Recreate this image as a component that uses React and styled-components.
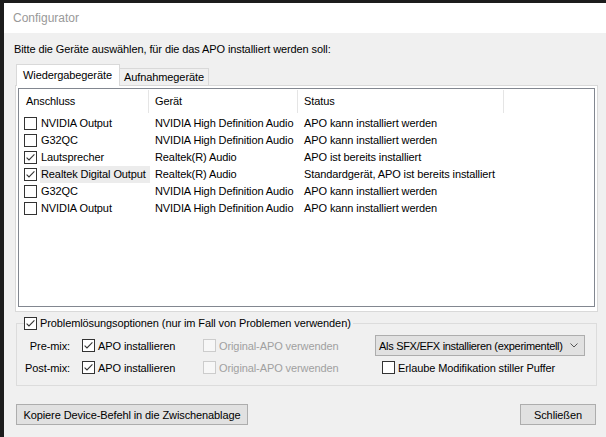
import React from "react";
import styled, { createGlobalStyle } from "styled-components";

const GlobalStyle = createGlobalStyle`
  html, body {
    margin: 0;
    padding: 0;
    background: #1c1c1c;
  }
  body {
    font-family: "Liberation Sans", Arial, sans-serif;
    font-size: 11px;
    letter-spacing: -0.1px;
    color: #000;
    overflow: hidden;
  }
`;

const Desktop = styled.div`
  width: 606px;
  height: 437px;
  padding: 3px 0 0 4px;
  box-sizing: border-box;
  overflow: hidden;
  background: #1c1c1c;
`;

const Window = styled.div`
  width: 602px;
  height: 434px;
  display: flex;
  flex-direction: column;
  background: #f0f0f0;
`;

const TitleBar = styled.div`
  flex: none;
  height: 30px;
  line-height: 30px;
  padding-left: 9px;
  background: #fff;
  color: #999;
  font-size: 12px;
  letter-spacing: 0;
`;

const Body = styled.div`
  flex: 1;
  display: flex;
  flex-direction: column;
  padding: 8px 8px 0 11px;
`;

const Intro = styled.div`
  line-height: 16px;
  margin-left: -1px;
`;

const TabStrip = styled.div`
  display: flex;
  align-items: flex-end;
  height: 21px;
  margin-top: 7px;
  padding-left: 1px;
`;

const Tab = styled.div`
  position: relative;
  box-sizing: border-box;
  width: ${({ $w }) => $w}px;
  height: ${({ $active }) => ($active ? 22 : 17)}px;
  margin-bottom: ${({ $active }) => ($active ? -1 : 0)}px;
  z-index: ${({ $active }) => ($active ? 1 : 0)};
  padding-left: ${({ $active }) => ($active ? 6 : 4)}px;
  line-height: ${({ $active }) => ($active ? 21 : 17)}px;
  background: ${({ $active }) => ($active ? "#fff" : "#f0f0f0")};
  border: 1px solid #d9d9d9;
  border-bottom: none;
  border-left: ${({ $active }) => ($active ? "1px solid #d9d9d9" : "none")};
  white-space: nowrap;
`;

const Panel = styled.div`
  box-sizing: border-box;
  height: 227px;
  padding: 2px 2px 4px 2px;
  background: #fff;
  border: 1px solid #d9d9d9;
`;

const ListView = styled.div`
  box-sizing: border-box;
  height: 219px;
  border: 1px solid #828790;
  background: #fff;
  overflow: hidden;
`;

const columns = "130px 149px 206px 1fr";

const HeaderRow = styled.div`
  display: grid;
  grid-template-columns: ${columns};
  height: 26px;
`;

const HeaderCell = styled.div`
  height: 23px;
  margin-top: 1px;
  line-height: 23px;
  padding-left: ${({ $pad }) => $pad || 6}px;
  border-right: ${({ $last }) => ($last ? "none" : "1px solid #e5e5e5")};
  white-space: nowrap;
`;

const Row = styled.div`
  display: grid;
  grid-template-columns: ${columns};
  height: 17px;
  line-height: 17px;
`;

const NameCell = styled.div`
  display: flex;
  align-items: center;
  padding-left: 5px;
  gap: 3px;
  white-space: nowrap;
`;

const NameLabel = styled.span`
  flex: 1;
  padding-left: 1px;
  margin-right: -1px;
  background: ${({ $selected }) => ($selected ? "#ececec" : "transparent")};
`;

const Cell = styled.div`
  padding-left: 6px;
  white-space: nowrap;
`;

const Box = styled.span`
  flex: none;
  box-sizing: border-box;
  width: 13px;
  height: 13px;
  display: inline-flex;
  align-items: center;
  justify-content: center;
  background: ${({ $disabled }) => ($disabled ? "#f7f7f7" : "#fff")};
  border: 1px solid ${({ $disabled }) => ($disabled ? "#cccccc" : "#333")};
`;

const Check = ({ checked, disabled }) => (
  <Box $disabled={disabled}>
    {checked && (
      <svg width="11" height="11" viewBox="0 0 11 11">
        <polyline
          points="1.6,5.6 4,8 9.4,2.4"
          fill="none"
          stroke="#333"
          strokeWidth="1.1"
        />
      </svg>
    )}
  </Box>
);

const Group = styled.fieldset`
  box-sizing: border-box;
  margin: 4px 0 0 1px;
  width: 581px;
  padding: 3px 0 7px 0;
  border: 1px solid #dcdcdc;
  min-width: 0;
`;

const Legend = styled.legend`
  display: flex;
  align-items: center;
  gap: 3px;
  margin-left: 7px;
  padding: 0 2px 0 0;
  line-height: 15px;
`;

const OptionGrid = styled.div`
  display: grid;
  grid-template-columns: 53px 133px 172px 210px;
  grid-template-rows: 23px 21px;
  align-items: center;
`;

const MixLabel = styled.div`
  text-align: right;
  white-space: nowrap;
`;

const Option = styled.label`
  display: flex;
  align-items: center;
  gap: 3px;
  padding-left: ${({ $pad }) => $pad || 0}px;
  color: ${({ $disabled }) => ($disabled ? "#a0a0a0" : "#000")};
  white-space: nowrap;
`;

const Select = styled.div`
  box-sizing: border-box;
  height: 21px;
  width: 210px;
  display: flex;
  align-items: center;
  justify-content: space-between;
  padding: 0 6px 0 3px;
  background: #e1e1e1;
  border: 1px solid #adadad;
  letter-spacing: -0.3px;
  white-space: nowrap;
`;

const ButtonRow = styled.div`
  display: flex;
  justify-content: space-between;
  margin-top: 18px;
  padding: 0 2px 0 1px;
`;

const Button = styled.button`
  box-sizing: border-box;
  width: ${({ $w }) => $w}px;
  height: 21px;
  padding: 0;
  font: inherit;
  letter-spacing: inherit;
  color: #000;
  background: #e1e1e1;
  border: 1px solid #adadad;
`;

const devices = [
  { name: "NVIDIA Output", device: "NVIDIA High Definition Audio", status: "APO kann installiert werden", checked: false },
  { name: "G32QC", device: "NVIDIA High Definition Audio", status: "APO kann installiert werden", checked: false },
  { name: "Lautsprecher", device: "Realtek(R) Audio", status: "APO ist bereits installiert", checked: true },
  { name: "Realtek Digital Output", device: "Realtek(R) Audio", status: "Standardgerät, APO ist bereits installiert", checked: true, selected: true },
  { name: "G32QC", device: "NVIDIA High Definition Audio", status: "APO kann installiert werden", checked: false },
  { name: "NVIDIA Output", device: "NVIDIA High Definition Audio", status: "APO kann installiert werden", checked: false },
];

export default function App() {
  return (
    <Desktop>
      <GlobalStyle />
      <Window>
        <TitleBar>Configurator</TitleBar>
        <Body>
          <Intro>Bitte die Geräte auswählen, für die das APO installiert werden soll:</Intro>
          <TabStrip>
            <Tab $active $w={104}>Wiedergabegeräte</Tab>
            <Tab $w={89}>Aufnahmegeräte</Tab>
          </TabStrip>
          <Panel>
            <ListView>
              <HeaderRow>
                <HeaderCell $pad={7}>Anschluss</HeaderCell>
                <HeaderCell>Gerät</HeaderCell>
                <HeaderCell>Status</HeaderCell>
                <HeaderCell $last />
              </HeaderRow>
              {devices.map((d, i) => (
                <Row key={i}>
                  <NameCell>
                    <Check checked={d.checked} />
                    <NameLabel $selected={d.selected}>{d.name}</NameLabel>
                  </NameCell>
                  <Cell>{d.device}</Cell>
                  <Cell>{d.status}</Cell>
                  <div />
                </Row>
              ))}
            </ListView>
          </Panel>
          <Group>
            <Legend>
              <Check checked />
              Problemlösungsoptionen (nur im Fall von Problemen verwenden)
            </Legend>
            <OptionGrid>
              <MixLabel>Pre-mix:</MixLabel>
              <Option $pad={12}>
                <Check checked />
                APO installieren
              </Option>
              <Option $disabled>
                <Check disabled />
                Original-APO verwenden
              </Option>
              <Select>
                Als SFX/EFX installieren (experimentell)
                <svg width="8" height="5" viewBox="0 0 8 5">
                  <polyline points="0.5,0.5 4,4 7.5,0.5" fill="none" stroke="#555" strokeWidth="1" />
                </svg>
              </Select>
              <MixLabel>Post-mix:</MixLabel>
              <Option $pad={12}>
                <Check checked />
                APO installieren
              </Option>
              <Option $disabled>
                <Check disabled />
                Original-APO verwenden
              </Option>
              <Option $pad={7}>
                <Check />
                Erlaube Modifikation stiller Puffer
              </Option>
            </OptionGrid>
          </Group>
          <ButtonRow>
            <Button $w={232}>Kopiere Device-Befehl in die Zwischenablage</Button>
            <Button $w={76}>Schließen</Button>
          </ButtonRow>
        </Body>
      </Window>
    </Desktop>
  );
}
